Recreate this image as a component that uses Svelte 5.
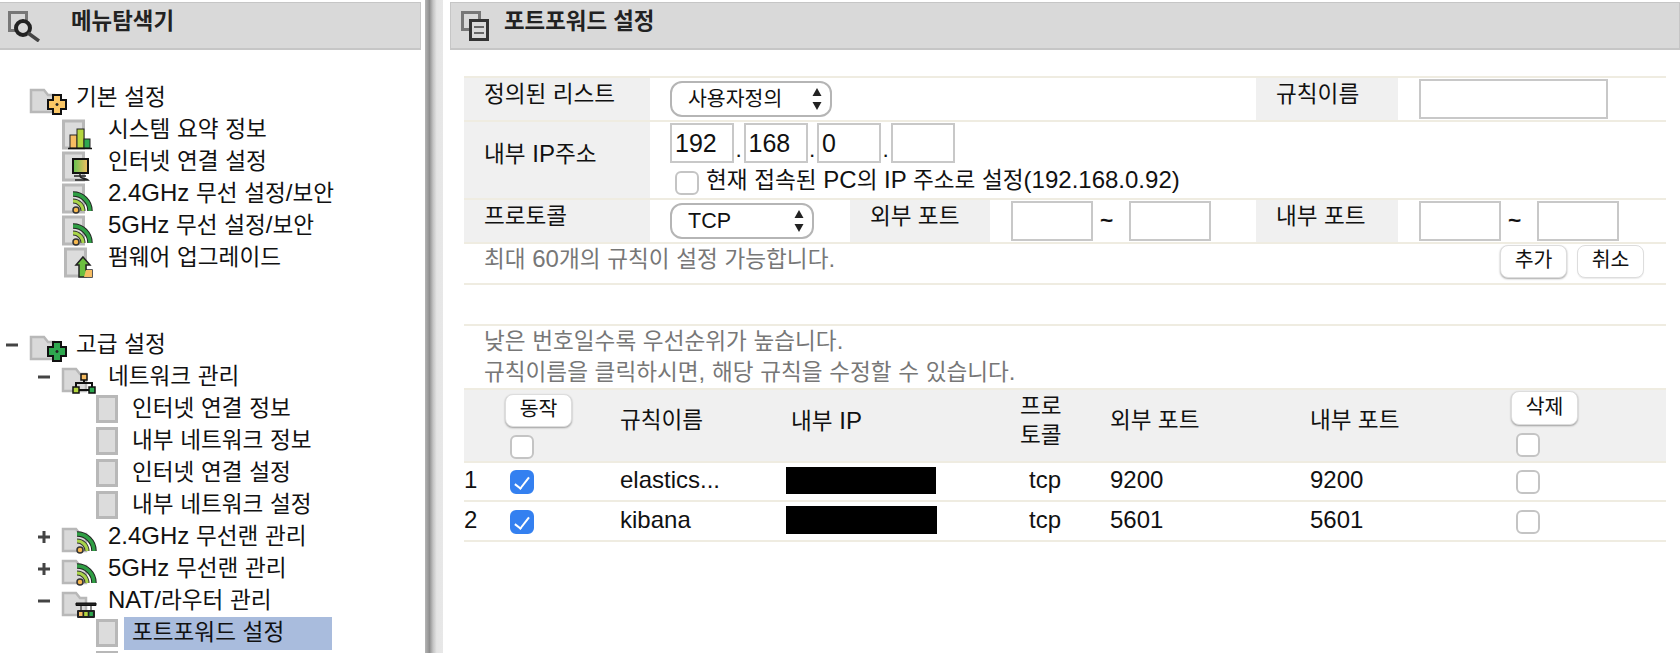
<script>
  // sidebar tree, top to bottom
  const basic = [
    { label: '기본 설정', level: 0, icon: 'plus-y' },
    { label: '시스템 요약 정보', level: 1, icon: 'chart' },
    { label: '인터넷 연결 설정', level: 1, icon: 'monitor' },
    { label: '2.4GHz 무선 설정/보안', level: 1, icon: 'wifi' },
    { label: '5GHz 무선 설정/보안', level: 1, icon: 'wifi' },
    { label: '펌웨어 업그레이드', level: 1, icon: 'arrow' }
  ];
  const advanced = [
    { label: '고급 설정', level: 0, icon: 'plus-g', exp: '-' },
    { label: '네트워크 관리', level: 1, icon: 'net', exp: '-' },
    { label: '인터넷 연결 정보', level: 2 },
    { label: '내부 네트워크 정보', level: 2 },
    { label: '인터넷 연결 설정', level: 2 },
    { label: '내부 네트워크 설정', level: 2 },
    { label: '2.4GHz 무선랜 관리', level: 1, icon: 'gwifi', exp: '+' },
    { label: '5GHz 무선랜 관리', level: 1, icon: 'gwifi', exp: '+' },
    { label: 'NAT/라우터 관리', level: 1, icon: 'router', exp: '-' },
    { label: '포트포워드 설정', level: 2, active: true },
    { label: '', level: 2 }
  ];
  const rules = [
    { id: 1, name: 'elastics...', proto: 'tcp', ext: '9200', int: '9200' },
    { id: 2, name: 'kibana', proto: 'tcp', ext: '5601', int: '5601' }
  ];

  // hangul runs a little small in Noto next to Latin, so ascii text gets its own size
  const runs = (s) => s.split(/([\x20-\x7e]+)/).filter(Boolean);
  const isAscii = (s) => /^[\x20-\x7e]/.test(s);
</script>

{#snippet txt(s)}{#each runs(s) as run}{#if isAscii(run)}<span class="en">{run}</span>{:else}{run}{/if}{/each}{/snippet}

{#snippet folder()}
  <path d="M1 8H14L18 13H24V30H1Z" fill="#d9d9d9" stroke="#b8b8b8" stroke-width="2.5" />
{/snippet}

{#snippet doc()}
  <rect x="1.5" y="7" width="20" height="27" fill="#dcdcdc" stroke="#b8b8b8" stroke-width="3" />
{/snippet}

{#snippet wifi(x, y)}
  <g fill="none" stroke-linecap="butt">
    <path d="M{x - 3} {y - 16}A17 17 0 0 1 {x + 14} {y + 1}" stroke="#222" stroke-width="5.5" />
    <path d="M{x - 3} {y - 16}A17 17 0 0 1 {x + 14} {y + 1}" stroke="#2f9e44" stroke-width="3.5" />
    <path d="M{x - 3} {y - 9}A10 10 0 0 1 {x + 7} {y + 1}" stroke="#333" stroke-width="5" />
    <path d="M{x - 3} {y - 9}A10 10 0 0 1 {x + 7} {y + 1}" stroke="#a8d44a" stroke-width="3" />
  </g>
  <circle cx={x} cy={y} r="3" fill="#f7b84e" stroke="#333" stroke-width="1.5" />
{/snippet}

{#snippet treeIcon(name)}
  <svg class="ico" viewBox="0 0 46 32" width="46" height="32">
    {#if name === 'plus-y' || name === 'plus-g'}
      {@const fill = name === 'plus-y' ? '#fbc766' : '#2ea84f'}
      {@render folder()}
      <path d="M23 13h8v5h5v9h-5v5h-8v-5h-5v-9h5z" fill={fill} stroke="#111" stroke-width="2" />
      <path d="M25.5 22.5h3M27 21v3" stroke="#222" stroke-width="1.5" />
    {:else if name === 'chart'}
      {@render doc()}
      <rect x="8" y="21" width="7" height="13" fill="#f7bd62" stroke="#222" />
      <rect x="15" y="15" width="7" height="19" fill="#b4d63f" stroke="#222" />
      <rect x="22" y="25" width="6" height="9" fill="#2ea84f" stroke="#222" />
      <path d="M6 34.5H30" stroke="#111" stroke-width="1.5" />
    {:else if name === 'monitor'}
      <defs>
        <linearGradient id="screen" x1="0" x2="1">
          <stop offset="0" stop-color="#5fc24f" />
          <stop offset="1" stop-color="#f7bd62" />
        </linearGradient>
      </defs>
      {@render doc()}
      <rect x="11" y="13" width="15" height="14" fill="url(#screen)" stroke="#111" stroke-width="2" />
      <path d="M18 27v3M12 30h12M18 30c0 3 6 2 8 4H13" fill="none" stroke="#222" stroke-width="1.5" />
    {:else if name === 'wifi'}
      {@render doc()}
      {@render wifi(14, 32)}
    {:else if name === 'arrow'}
      <rect x="3.5" y="7" width="20" height="27" fill="#dcdcdc" stroke="#b8b8b8" stroke-width="3" />
      <path d="M21 15l7 8h-4v5h6v7H17V23h-3z" fill="#6bbf3f" stroke="#222" stroke-width="1.5" />
      <path d="M24 28h6v7h-8z" fill="#f7bd62" />
    {:else if name === 'net'}
      {@render folder()}
      <path d="M22 16V22H14V29M22 22H30V29M14 29H30" fill="none" stroke="#111" stroke-width="2" />
      <rect x="19" y="13" width="6" height="6" fill="#f7bd62" stroke="#111" stroke-width="1.5" />
      <rect x="11" y="26" width="6" height="6" fill="#b4d63f" stroke="#111" stroke-width="1.5" />
      <rect x="27" y="26" width="6" height="6" fill="#2ea84f" stroke="#111" stroke-width="1.5" />
    {:else if name === 'gwifi'}
      {@render folder()}
      {@render wifi(18, 29)}
    {:else if name === 'router'}
      {@render folder()}
      <path d="M14 18H34V20.5H14ZM19 20.5V25M29 20.5V25" fill="#222" stroke="#111" />
      <rect x="15" y="25" width="18" height="8" rx="1" fill="#222" />
      <rect x="17" y="27" width="3.5" height="4" fill="#f7bd62" />
      <rect x="22.2" y="27" width="3.5" height="4" fill="#b4d63f" />
      <rect x="27.4" y="27" width="3.5" height="4" fill="#2ea84f" />
    {/if}
  </svg>
{/snippet}

{#snippet node(item)}
  <div class="node lv{item.level}">
    {#if item.level < 2}
      <span class="exp">
        {#if item.exp === '-' || item.exp === '+'}
          <svg viewBox="0 0 12 12" width="12" height="12">
            <path d={item.exp === '-' ? 'M0 6H12' : 'M0 6H12M6 0V12'} stroke="#444" stroke-width="3" />
          </svg>
        {/if}
      </span>
      {@render treeIcon(item.icon)}
      <span class="label">{@render txt(item.label)}</span>
    {:else}
      <span class="leaf"></span>
      {#if item.label}
        <span class="label" class:active={item.active}>{@render txt(item.label)}</span>
      {/if}
    {/if}
  </div>
{/snippet}

{#snippet arrows()}
  <svg class="arrows" viewBox="0 0 10 24" width="10" height="24">
    <path d="M5 1L9.5 9H.5ZM5 23L.5 15H9.5Z" fill="#222" />
  </svg>
{/snippet}

<div class="page">
  <aside class="sidebar">
    <header class="bar side-bar">
      <svg viewBox="0 0 32 32" width="32" height="32">
        <rect x="1.5" y="2.5" width="17" height="18" fill="none" stroke="#777" stroke-width="3" />
        <circle cx="15" cy="18" r="7" fill="#d9d9d9" stroke="#222" stroke-width="4" />
        <path d="M20 23L31 31" stroke="#444" stroke-width="3.5" />
      </svg>
      <h2>메뉴탐색기</h2>
    </header>
    <nav class="tree">
      <div class="group">
        {#each basic as item}
          {@render node(item)}
        {/each}
      </div>
      <div class="group">
        {#each advanced as item}
          {@render node(item)}
        {/each}
      </div>
    </nav>
  </aside>

  <div class="divider"></div>

  <main class="content">
    <header class="bar main-bar">
      <svg viewBox="0 0 29 30" width="29" height="30">
        <rect x="1.5" y="1.5" width="17" height="17" fill="none" stroke="#777" stroke-width="3" />
        <rect x="9.5" y="9.5" width="17" height="19" fill="#d9d9d9" stroke="#333" stroke-width="3" />
        <path d="M13 16H23M13 22H23" stroke="#666" stroke-width="2" />
      </svg>
      <h2>포트포워드 설정</h2>
    </header>

    <table class="form">
      <colgroup>
        <col style="width:186px" /><col style="width:200px" /><col style="width:140px" />
        <col style="width:266px" /><col style="width:142px" /><col style="width:268px" />
      </colgroup>
      <tbody>
        <tr class="r1">
          <th>정의된 리스트</th>
          <td colspan="3">
            <div class="select wide">사용자정의{@render arrows()}</div>
          </td>
          <th class="mid">규칙이름</th>
          <td><input class="field name" type="text" /></td>
        </tr>
        <tr class="r2">
          <th>{@render txt('내부 IP주소')}</th>
          <td colspan="5">
            <div class="ip">
              <input class="field oct" type="text" value="192" />
              <span class="dot">.</span>
              <input class="field oct" type="text" value="168" />
              <span class="dot">.</span>
              <input class="field oct" type="text" value="0" />
              <span class="dot">.</span>
              <input class="field oct" type="text" />
            </div>
            <label class="current">
              <input class="cb" type="checkbox" />
              <span class="cap">{@render txt('현재 접속된 PC의 IP 주소로 설정(192.168.0.92)')}</span>
            </label>
          </td>
        </tr>
        <tr class="r3">
          <th>프로토콜</th>
          <td><div class="select narrow">TCP{@render arrows()}</div></td>
          <th class="mid">외부 포트</th>
          <td>
            <div class="ports">
              <input class="field port" type="text" /><span class="tilde">~</span><input class="field port" type="text" />
            </div>
          </td>
          <th class="mid">내부 포트</th>
          <td>
            <div class="ports">
              <input class="field port" type="text" /><span class="tilde">~</span><input class="field port" type="text" />
            </div>
          </td>
        </tr>
        <tr class="r4">
          <td colspan="4" class="note">{@render txt('최대 60개의 규칙이 설정 가능합니다.')}</td>
          <td colspan="2">
            <div class="actions">
              <button class="btn">추가</button>
              <button class="btn flat">취소</button>
            </div>
          </td>
        </tr>
      </tbody>
    </table>

    <table class="list">
      <colgroup>
        <col style="width:41px" /><col style="width:115px" /><col style="width:166px" /><col style="width:214px" />
        <col style="width:110px" /><col style="width:200px" /><col style="width:201px" /><col style="width:155px" />
      </colgroup>
      <thead>
        <tr>
          <td colspan="8" class="hint">
            {@render txt('낮은 번호일수록 우선순위가 높습니다.')}<br />
            {@render txt('규칙이름을 클릭하시면, 해당 규칙을 수정할 수 있습니다.')}
          </td>
        </tr>
        <tr class="head">
          <th></th>
          <th class="stack first"><button class="btn">동작</button><input class="cb" type="checkbox" /></th>
          <th>규칙이름</th>
          <th class="ip-head">{@render txt('내부 IP')}</th>
          <th class="proto">프로<br />토콜</th>
          <th>외부 포트</th>
          <th>내부 포트</th>
          <th class="stack"><button class="btn">삭제</button><input class="cb" type="checkbox" /></th>
        </tr>
      </thead>
      <tbody>
        {#each rules as rule}
          <tr class="row">
            <td class="num">{rule.id}</td>
            <td class="pick"><input class="cb" type="checkbox" checked /></td>
            <td>{rule.name}</td>
            <td class="hole"><div class="mask"></div></td>
            <td class="proto">{rule.proto}</td>
            <td>{rule.ext}</td>
            <td>{rule.int}</td>
            <td class="pick"><input class="cb" type="checkbox" /></td>
          </tr>
        {/each}
      </tbody>
    </table>
  </main>
</div>

<style>
  :global(body) {
    margin: 0;
    background: #fff;
    overflow: hidden;
  }
  .page {
    display: flex;
    height: 653px;
    overflow: hidden;
    font-family: "Liberation Sans", "Noto Sans CJK KR", sans-serif;
    font-size: 22.6px;
    line-height: 30px;
    color: #111;
  }
  .en {
    font-size: 24px;
  }
  .sidebar {
    width: 425px;
    flex: none;
  }
  .divider {
    width: 18px;
    flex: none;
    margin-right: 7px;
    background: linear-gradient(90deg, #b5b5b5 0, #8f8f8f 25%, #c4c4c4 45%, #e4e4e4 65%, #e8e8e8 100%);
  }
  .content {
    flex: 1;
    min-width: 0;
  }

  .bar {
    display: flex;
    align-items: center;
    box-sizing: border-box;
    height: 48px;
    margin-top: 2px;
    background: #d9d9d9;
    border: 1px solid #c6c6c6;
    border-width: 1px 1px 2px 0;
  }
  .bar h2 {
    margin: 0 0 8px;
    font-size: 22.4px;
    line-height: 34px;
    font-weight: 700;
    color: #222;
  }
  .side-bar {
    width: 421px;
    padding-left: 8px;
  }
  .side-bar h2 {
    margin-left: 31px;
  }
  .main-bar {
    padding-left: 10px;
    border-left-width: 1px;
  }
  .main-bar h2 {
    margin-left: 14px;
  }

  .tree {
    margin-top: 32px;
  }
  .group {
    margin-bottom: 55px;
  }
  .node {
    display: flex;
    align-items: center;
    height: 32px;
    white-space: nowrap;
  }
  .lv0 {
    padding-left: 6px;
  }
  .lv1 {
    padding-left: 38px;
  }
  .lv2 {
    padding-left: 96px;
  }
  .exp {
    display: flex;
    flex: none;
    width: 24px;
  }
  .ico {
    flex: none;
    overflow: visible;
  }
  .leaf {
    box-sizing: border-box;
    flex: none;
    width: 22px;
    height: 28px;
    margin-right: 6px;
    background: #dcdcdc;
    border: 3px solid #b8b8b8;
  }
  .label {
    padding-bottom: 2px;
  }
  .lv2 .label {
    padding-left: 8px;
  }
  .label.active {
    box-sizing: border-box;
    width: 208px;
    background: #a9bcdd;
  }

  table {
    border-collapse: separate;
    border-spacing: 0;
    table-layout: fixed;
    width: 1202px;
    margin-left: 14px;
  }
  th {
    font-weight: 400;
    text-align: left;
  }
  td,
  th {
    padding: 0;
    box-sizing: border-box;
  }
  .form {
    margin-top: 26px;
  }
  .form td,
  .form th {
    border-bottom: 2px solid #efece1;
  }
  .form .r1 td,
  .form .r1 th {
    border-top: 2px solid #efece1;
    height: 46px;
  }
  .form th {
    padding: 0 0 8px 20px;
    background: #f0f0f0;
    background-clip: padding-box;
  }
  .form .r2 th,
  .form .r2 td {
    height: 78px;
  }
  .form .r2 td {
    vertical-align: top;
  }
  .form .r2 th {
    padding-bottom: 12px;
  }
  .form .r3 th,
  .form .r3 td {
    height: 44px;
  }
  .form .r4 td {
    height: 40px;
  }
  .form td {
    padding-left: 20px;
  }
  .field {
    box-sizing: border-box;
    height: 40px;
    margin: 0;
    padding: 0 3px;
    font: inherit;
    font-size: 25px;
    color: #111;
    background: #fff;
    border: 2px solid #c8c8c8;
    border-radius: 0;
    outline: none;
  }
  .name {
    display: block;
    width: 189px;
    margin-left: 1px;
  }
  .oct {
    width: 64px;
  }
  .ip {
    display: flex;
    align-items: center;
    margin-top: 1px;
  }
  .dot {
    width: 9.5px;
    padding-top: 13px;
    line-height: 20px;
    text-align: center;
  }
  .current {
    display: flex;
    align-items: center;
    gap: 7px;
    margin: 6px 0 0 5px;
    line-height: 26px;
  }
  .cap {
    line-height: 22px;
    padding-bottom: 4px;
  }
  .select {
    display: flex;
    align-items: center;
    justify-content: space-between;
    box-sizing: border-box;
    height: 36px;
    padding: 0 8px 0 16px;
    font-size: 20.5px;
    line-height: 26px;
    background: #fff;
    border: 2px solid #b5b5b5;
    border-radius: 12px;
  }
  .wide {
    width: 162px;
  }
  .narrow {
    width: 144px;
    font-size: 21.5px;
  }
  .ports {
    display: flex;
    align-items: center;
    margin-left: 1px;
  }
  .port {
    width: 82px;
  }
  .tilde {
    box-sizing: border-box;
    width: 36px;
    padding-right: 9px;
    text-align: center;
    font-weight: 700;
  }
  .form .note {
    padding-bottom: 8px;
    color: #777;
  }
  .actions {
    display: flex;
    justify-content: flex-end;
    gap: 10px;
    padding: 0 22px 5px 0;
  }
  .btn {
    box-sizing: border-box;
    width: 67px;
    height: 33px;
    margin: 0;
    padding: 0 0 3px;
    font: inherit;
    font-size: 20.5px;
    line-height: 26px;
    color: #111;
    background: #fff;
    border: 1px solid #ddd;
    border-radius: 8px;
    box-shadow: 0 1px 2px rgba(0, 0, 0, 0.35);
  }
  .btn.flat {
    box-shadow: 0 1px 1px rgba(0, 0, 0, 0.08);
  }
  .cb {
    appearance: none;
    position: relative;
    box-sizing: border-box;
    flex: none;
    width: 24px;
    height: 24px;
    margin: 0;
    background: #fff;
    border: 2px solid #c4c4c4;
    border-radius: 6px;
  }
  .cb:checked {
    background: #3480f0;
    border-color: #3480f0;
  }
  .cb:checked::after {
    content: "";
    position: absolute;
    left: 6px;
    top: 2px;
    width: 6px;
    height: 13px;
    border: solid #fff;
    border-width: 0 2px 2px 0;
    transform: rotate(38deg);
  }

  .list {
    margin-top: 39px;
  }
  .hint {
    height: 64px;
    padding: 0 0 0 20px;
    color: #777;
    border-top: 2px solid #efece1;
    border-bottom: 2px solid #efece1;
    vertical-align: top;
  }
  .head th {
    height: 73px;
    padding-bottom: 10px;
    background: #f0f0f0;
    border-bottom: 2px solid #efece1;
    line-height: 29px;
  }
  .head .stack {
    padding: 1px 0 0;
    vertical-align: top;
  }
  .stack .btn {
    display: block;
    height: 34px;
    margin-bottom: 8px;
  }
  .stack .cb {
    display: block;
    margin-left: 5px;
  }
  .head .first {
    padding: 4px 0 0;
  }
  .head .first .btn {
    height: 33px;
  }
  .ip-head {
    padding-left: 5px;
  }
  .proto {
    padding-right: 20px;
    text-align: center;
  }
  .head .proto {
    text-align: left;
    padding-left: 20px;
    padding-right: 0;
  }
  .row td {
    height: 39px;
    padding-bottom: 3px;
    border-bottom: 2px solid #efece1;
    font-size: 24px;
  }
  .row:last-child td {
    height: 40px;
  }
  .row .pick {
    padding-bottom: 2px;
  }
  .row .proto {
    padding-right: 20px;
  }
  .num {
    padding-left: 0;
  }
  .pick .cb {
    display: block;
    margin: 3px 0 0 5px;
  }
  .mask {
    width: 150px;
    height: 27px;
    background: #000;
  }
  .row:last-child .mask {
    width: 151px;
    height: 28px;
  }
</style>
